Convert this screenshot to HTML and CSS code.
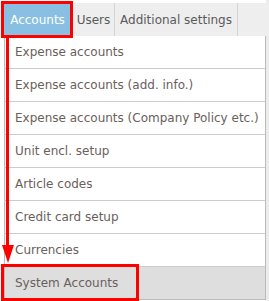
FILE: index.html
```html
<!DOCTYPE html>
<html lang="en">
<head>
    <meta charset="UTF-8">
    <title>Settings menu</title>
    <link rel="stylesheet" href="styles.css">
</head>
<body>
    <div class="page">
        <div class="tabs">
            <div class="tab tab-active">Accounts</div>
            <div class="tab tab-users">Users</div>
            <div class="tab tab-settings">Additional settings</div>
        </div>

        <ul class="menu">
            <li>Expense accounts</li>
            <li>Expense accounts (add. info.)</li>
            <li>Expense accounts (Company Policy etc.)</li>
            <li>Unit encl. setup</li>
            <li>Article codes</li>
            <li>Credit card setup</li>
            <li>Currencies</li>
            <li class="selected">System Accounts</li>
        </ul>

        <!-- annotation: highlight boxes and arrow -->
        <div class="mark mark-tab"></div>
        <div class="mark mark-item"></div>
        <svg class="arrow" width="16" height="230" viewBox="0 0 16 230">
            <rect x="6" y="0" width="3" height="210" fill="#ff0000"/>
            <polygon points="2,207 14,207 8,225" fill="#ff0000"/>
        </svg>
    </div>
</body>
</html>
```

FILE: styles.css
```css
body {
    margin: 0;
    background-color: #ffffff;
    font-family: "DejaVu Sans", Verdana, sans-serif;
    font-size: 12px;
}
.page {
    position: relative;
    width: 269px;
    height: 301px;
    overflow: hidden;
    padding-top: 3px;
    box-sizing: border-box;
    background: linear-gradient(to right, #ffffff 266px, #ececec 266px);
}
.tabs {
    display: flex;
    height: 33px;
    margin-left: 3px;
    background-color: #eeeeee;
}
.tab {
    display: flex;
    align-items: center;
    justify-content: center;
    color: #5a5a5a;
    border-right: 1px solid #d4d4d4;
    box-sizing: border-box;
    white-space: nowrap;
}
.tab-active {
    width: 70px;
    background-color: #89bfe2;
    color: #ffffff;
}
.tab-users {
    width: 42px;
}
.tab-settings {
    width: 123px;
}
.menu {
    list-style: none;
    margin: 0 0 0 4px;
    padding: 0;
    width: 262px;
    box-sizing: border-box;
    background-color: #ffffff;
    border: 1px solid #bbbbbb;
    border-top: none;
}
.menu li {
    height: 32px;
    line-height: 32px;
    padding-left: 10px;
    color: #6a605b;
    border-bottom: 1px solid #cccccc;
    white-space: nowrap;
}
.menu li:last-child {
    border-bottom: none;
}
.menu li.selected {
    background-color: #dedede;
}
.mark {
    position: absolute;
    border: 3px solid #ff0000;
    box-sizing: border-box;
}
.mark-tab {
    left: 1px;
    top: 1px;
    width: 72px;
    height: 37px;
}
.mark-item {
    left: 1px;
    top: 264px;
    width: 138px;
    height: 37px;
}
.arrow {
    position: absolute;
    left: 0;
    top: 38px;
}
```
